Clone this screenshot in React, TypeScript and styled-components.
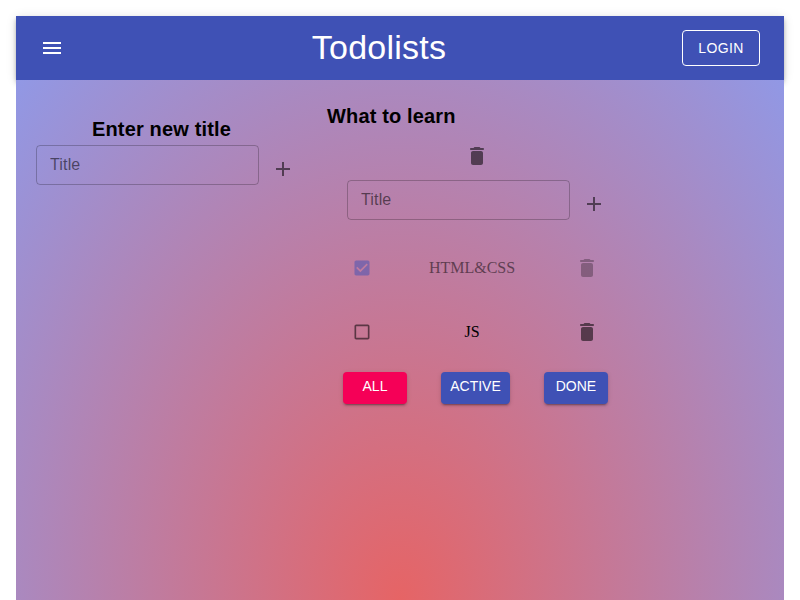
import React from "react";
import styled, { createGlobalStyle } from "styled-components";

const GlobalStyle = createGlobalStyle`
  *, *::before, *::after { box-sizing: border-box; }
  html { background: #fff; }
  body { margin: 0; padding: 16px 16px 0; }
`;

const sans = `"Liberation Sans", Arial, sans-serif`;

const Page = styled.div`
  display: flex;
  flex-direction: column;
  width: 768px;
  height: 584px;
  font-family: "Liberation Serif", "Times New Roman", serif;
  font-size: 16px;
  color: #000;
`;

const AppBar = styled.header`
  display: flex;
  align-items: center;
  justify-content: space-between;
  flex: none;
  height: 64px;
  padding: 0 24px 0 12px;
  background: #3f51b5;
  color: #fff;
  box-shadow: 0 2px 4px -1px rgba(0, 0, 0, 0.2), 0 4px 5px 0 rgba(0, 0, 0, 0.14),
    0 1px 10px 0 rgba(0, 0, 0, 0.12);
`;

const Brand = styled.h1`
  margin: 0 0 2px;
  font: 400 34px/42px ${sans};
  letter-spacing: 0.25px;
`;

const IconButton = styled.button<{ $size?: number }>`
  display: flex;
  align-items: center;
  justify-content: center;
  flex: none;
  width: ${(p) => p.$size ?? 48}px;
  height: ${(p) => p.$size ?? 48}px;
  padding: 0;
  border: 0;
  background: transparent;
  color: rgba(0, 0, 0, 0.54);
`;

const MenuButton = styled(IconButton)`
  color: #fff;
`;

const Icon = styled.svg<{ $size?: number }>`
  display: block;
  width: ${(p) => p.$size ?? 24}px;
  height: ${(p) => p.$size ?? 24}px;
  fill: currentColor;
`;

const LoginButton = styled.button`
  width: 78px;
  height: 36px;
  padding: 0;
  border: 1px solid #fff;
  border-radius: 4px;
  background: transparent;
  color: #fff;
  font: 400 14px/24px ${sans};
  letter-spacing: 0.4px;
`;

const Content = styled.main`
  display: flex;
  align-items: flex-start;
  flex: 1;
  background: radial-gradient(#e66465, #9198e5) 0 0 / 100% 1040px no-repeat;
`;

const NewList = styled.section`
  width: 291px;
  margin: 36px 20px 0 0;
`;

const TodoList = styled.section`
  width: 300px;
  margin-top: 23px;
`;

const Heading = styled.h3<{ $align?: string }>`
  margin: 0;
  height: 29px;
  font: 700 20px/26px ${sans};
  letter-spacing: 0.15px;
  text-align: ${(p) => p.$align ?? "left"};
`;

const AddForm = styled.div`
  display: flex;
  align-items: flex-start;
  padding-left: 20px;
`;

const TitleInput = styled.input`
  width: 223px;
  height: 40px;
  padding: 0 13px;
  border: 1px solid rgba(0, 0, 0, 0.23);
  border-radius: 4px;
  outline: 0;
  background: transparent;
  font: 400 16px/19px ${sans};
  letter-spacing: 0.15px;
  &::placeholder { color: rgba(0, 0, 0, 0.54); opacity: 1; }
`;

const DeleteList = styled.div`
  display: flex;
  justify-content: center;
`;

const Tasks = styled.div`
  padding-top: 8px;
`;

const Task = styled.div<{ $done: boolean }>`
  display: flex;
  align-items: center;
  justify-content: space-between;
  height: 64px;
  padding: 0 16px 0 14px;
  opacity: ${(p) => (p.$done ? 0.5 : 1)};
`;

const TaskTitle = styled.span`
  margin-right: 2px;
`;

const TaskCheck = styled(IconButton)<{ $done: boolean }>`
  color: ${(p) => (p.$done ? "#3f51b5" : "rgba(0, 0, 0, 0.54)")};
`;

const Filters = styled.div`
  display: flex;
  justify-content: space-between;
  padding: 8px 19px 0 16px;
`;

const FilterButton = styled.button<{ $active?: boolean }>`
  min-width: 64px;
  height: 32px;
  padding: 0 9px 4px;
  border: 0;
  border-radius: 4px;
  background: ${(p) => (p.$active ? "#f50057" : "#3f51b5")};
  color: #fff;
  font: 400 14px/24px ${sans};
  white-space: nowrap;
  box-shadow: 0 3px 1px -2px rgba(0, 0, 0, 0.2), 0 2px 2px 0 rgba(0, 0, 0, 0.14),
    0 1px 5px 0 rgba(0, 0, 0, 0.12);
`;

const paths = {
  menu: "M3 18h18v-2H3v2zm0-5h18v-2H3v2zm0-7v2h18V6H3z",
  add: "M19 13h-6v6h-2v-6H5v-2h6V5h2v6h6v2z",
  checked:
    "M19 3H5c-1.11 0-2 .9-2 2v14c0 1.1.89 2 2 2h14c1.11 0 2-.9 2-2V5c0-1.1-.89-2-2-2zm-9 14l-5-5 1.41-1.41L10 14.17l7.59-7.59L19 8l-9 9z",
  unchecked:
    "M19 5v14H5V5h14m0-2H5c-1.1 0-2 .9-2 2v14c0 1.1.9 2 2 2h14c1.1 0 2-.9 2-2V5c0-1.1-.9-2-2-2z",
  trash:
    "M6 19c0 1.1.9 2 2 2h8c1.1 0 2-.9 2-2V9c0-1.1-.9-2-2-2H8c-1.1 0-2 .9-2 2v10zM18 4h-2.5l-.71-.71c-.18-.18-.44-.29-.7-.29H9.91c-.26 0-.52.11-.7.29L8.5 4H6c-.55 0-1 .45-1 1s.45 1 1 1h12c.55 0 1-.45 1-1s-.45-1-1-1z",
};

const Glyph = ({ name, size }: { name: keyof typeof paths; size?: number }) => (
  <Icon viewBox="0 0 24 24" $size={size} aria-hidden="true">
    <path d={paths[name]} />
  </Icon>
);

const AddItem = () => (
  <AddForm>
    <TitleInput placeholder="Title" />
    <IconButton aria-label="Add">
      <Glyph name="add" />
    </IconButton>
  </AddForm>
);

const tasks = [
  { title: "HTML&CSS", done: true },
  { title: "JS", done: false },
];

export default function App() {
  return (
    <>
      <GlobalStyle />
      <Page>
        <AppBar>
          <MenuButton aria-label="Menu">
            <Glyph name="menu" />
          </MenuButton>
          <Brand>Todolists</Brand>
          <LoginButton>LOGIN</LoginButton>
        </AppBar>
        <Content>
          <NewList>
            <Heading $align="center">Enter new title</Heading>
            <AddItem />
          </NewList>
          <TodoList>
            <Heading>What to learn</Heading>
            <DeleteList>
              <IconButton aria-label="Delete list">
                <Glyph name="trash" />
              </IconButton>
            </DeleteList>
            <AddItem />
            <Tasks>
              {tasks.map((task) => (
                <Task key={task.title} $done={task.done}>
                  <TaskCheck $size={42} $done={task.done} aria-label="Toggle task">
                    <Glyph name={task.done ? "checked" : "unchecked"} size={20} />
                  </TaskCheck>
                  <TaskTitle>{task.title}</TaskTitle>
                  <IconButton aria-label="Delete task">
                    <Glyph name="trash" />
                  </IconButton>
                </Task>
              ))}
            </Tasks>
            <Filters>
              <FilterButton $active>ALL</FilterButton>
              <FilterButton>ACTIVE</FilterButton>
              <FilterButton>DONE</FilterButton>
            </Filters>
          </TodoList>
        </Content>
      </Page>
    </>
  );
}
